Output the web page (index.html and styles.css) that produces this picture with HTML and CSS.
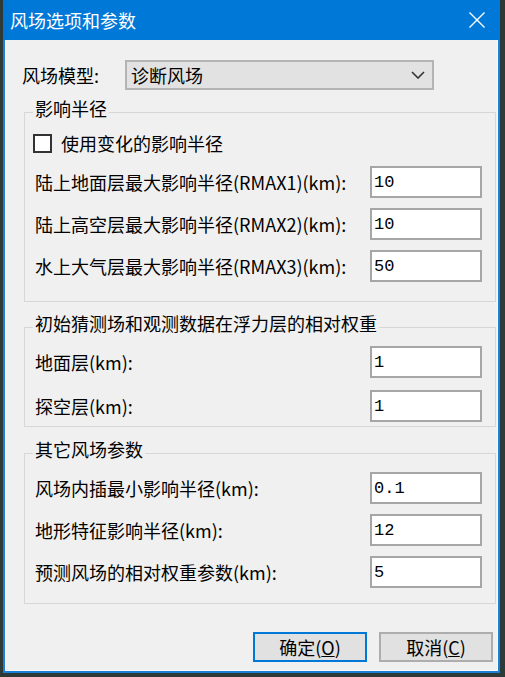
FILE: index.html
```html
<!DOCTYPE html>
<html lang="zh-CN">
<head>
<meta charset="utf-8">
<title>风场选项和参数</title>
<link rel="stylesheet" href="styles.css">
</head>
<body>
<div class="window">
  <div class="titlebar">
    <span class="title">风场选项和参数</span>
    <span class="close" aria-label="关闭">
      <svg width="16" height="16" viewBox="0 0 16 16"><path d="M0.5 0.5 L15.5 15.5 M15.5 0.5 L0.5 15.5" stroke="#fff" stroke-width="1.4" fill="none"/></svg>
    </span>
  </div>
  <div class="body">
    <div class="model-row">
      <span class="model-label">风场模型:</span>
      <div class="combo">
        <span class="combo-text">诊断风场</span>
        <svg class="chevron" width="14" height="8" viewBox="0 0 14 8"><path d="M1 1 L7 7 L13 1" stroke="#333" stroke-width="1.6" fill="none"/></svg>
      </div>
    </div>

    <fieldset class="group group-radius">
      <legend>影响半径</legend>
      <div class="check-row"><span class="checkbox"></span><span class="label">使用变化的影响半径</span></div>
      <div class="field-row"><span class="label">陆上地面层最大影响半径(RMAX1)(km):</span><input class="edit" value="10"></div>
      <div class="field-row"><span class="label">陆上高空层最大影响半径(RMAX2)(km):</span><input class="edit" value="10"></div>
      <div class="field-row"><span class="label">水上大气层最大影响半径(RMAX3)(km):</span><input class="edit" value="50"></div>
    </fieldset>

    <fieldset class="group group-weight">
      <legend>初始猜测场和观测数据在浮力层的相对权重</legend>
      <div class="field-row"><span class="label">地面层(km):</span><input class="edit" value="1"></div>
      <div class="field-row"><span class="label">探空层(km):</span><input class="edit" value="1"></div>
    </fieldset>

    <fieldset class="group group-other">
      <legend>其它风场参数</legend>
      <div class="field-row"><span class="label">风场内插最小影响半径(km):</span><input class="edit" value="0.1"></div>
      <div class="field-row"><span class="label">地形特征影响半径(km):</span><input class="edit" value="12"></div>
      <div class="field-row"><span class="label">预测风场的相对权重参数(km):</span><input class="edit" value="5"></div>
    </fieldset>

    <div class="buttons">
      <button class="btn btn-default">确定(<u>O</u>)</button>
      <button class="btn">取消(<u>C</u>)</button>
    </div>
  </div>
</div>
</body>
</html>
```

FILE: styles.css
```css
html, body {
  margin: 0;
  padding: 0;
}

body {
  background: #2e3a38;
  font-family: "Noto Sans CJK SC", "Noto Sans", sans-serif;
  font-size: 18px;
  color: #000;
  width: 505px;
  height: 677px;
  overflow: hidden;
}

.window {
  margin-left: 3px;
  width: 497px;
  box-sizing: border-box;
  background: #1a7fd6;
  padding: 0 2px 2px 2px;
}

.titlebar {
  height: 40px;
  margin: 0 -2px;
  background: #0078d7;
  display: flex;
  align-items: center;
  justify-content: space-between;
}

.title {
  color: #fff;
  font-size: 18px;
  line-height: 18px;
  padding-left: 7px;
}

.close {
  width: 46px;
  height: 40px;
  display: flex;
  align-items: center;
  justify-content: center;
}

.close svg {
  display: block;
}

.body {
  background: #f0f0f0;
  box-shadow: inset 1px 0 0 #fafafa, inset -1px 0 0 #fafafa, inset 0 -1px 0 #fafafa;
  padding: 20px 2px 9px 17px;
  display: flex;
  flex-direction: column;
}

.model-row {
  display: flex;
  align-items: center;
  height: 30px;
}

.model-label {
  width: 103px;
  line-height: 18px;
}

.combo {
  width: 309px;
  height: 30px;
  box-sizing: border-box;
  border: 2px solid #b4b4b4;
  background: #e2e2e2;
  display: flex;
  align-items: center;
  justify-content: space-between;
  padding: 0 7px 0 4px;
}

.combo-text {
  line-height: 18px;
}

.chevron {
  display: block;
}

.group {
  margin: 0 0 0 2px;
  border: 1px solid #d7d7d7;
  padding: 0 13px 0 10px;
  min-inline-size: 0;
}

.group legend {
  padding: 0 2px 8px 2px;
  margin-left: -2px;
  line-height: 18px;
  font-size: 18px;
}

.group-radius {
  margin-top: 9px;
  padding-bottom: 19px;
}

.group-weight {
  margin-top: 12px;
  padding-bottom: 4px;
}

.group-other {
  margin-top: 13px;
  padding-bottom: 15px;
}

.check-row {
  height: 36px;
  display: flex;
  align-items: center;
}

.checkbox {
  width: 19px;
  height: 19px;
  box-sizing: border-box;
  border: 2px solid #333;
  background: #fff;
  margin-left: -2px;
  margin-right: 9px;
}

.label {
  line-height: 18px;
  white-space: nowrap;
}

.field-row {
  display: flex;
  align-items: center;
  justify-content: space-between;
  height: 32px;
  margin-top: 10px;
}

.check-row + .field-row {
  margin-top: 5px;
}

.group legend + .field-row {
  margin-top: 6px;
}

.group-weight .field-row + .field-row {
  margin-top: 12px;
}

.edit {
  width: 112px;
  height: 32px;
  box-sizing: border-box;
  border: 2px solid #a6a6a6;
  background: #fff;
  padding: 0 2px;
  margin: 0;
  font-family: "Liberation Mono", "DejaVu Sans Mono", monospace;
  font-size: 17px;
  color: #000;
  outline: none;
}

.buttons {
  display: flex;
  justify-content: flex-end;
  gap: 12px;
  margin-top: 28px;
  padding-right: 3px;
}

.btn {
  width: 114px;
  height: 30px;
  box-sizing: border-box;
  border: 2px solid #adadad;
  background: #e1e1e1;
  font-family: "Noto Sans CJK SC", "Noto Sans", sans-serif;
  font-size: 18px;
  line-height: 18px;
  color: #000;
  padding: 0;
  margin: 0;
}

.btn-default {
  border-color: #0078d7;
}
```
